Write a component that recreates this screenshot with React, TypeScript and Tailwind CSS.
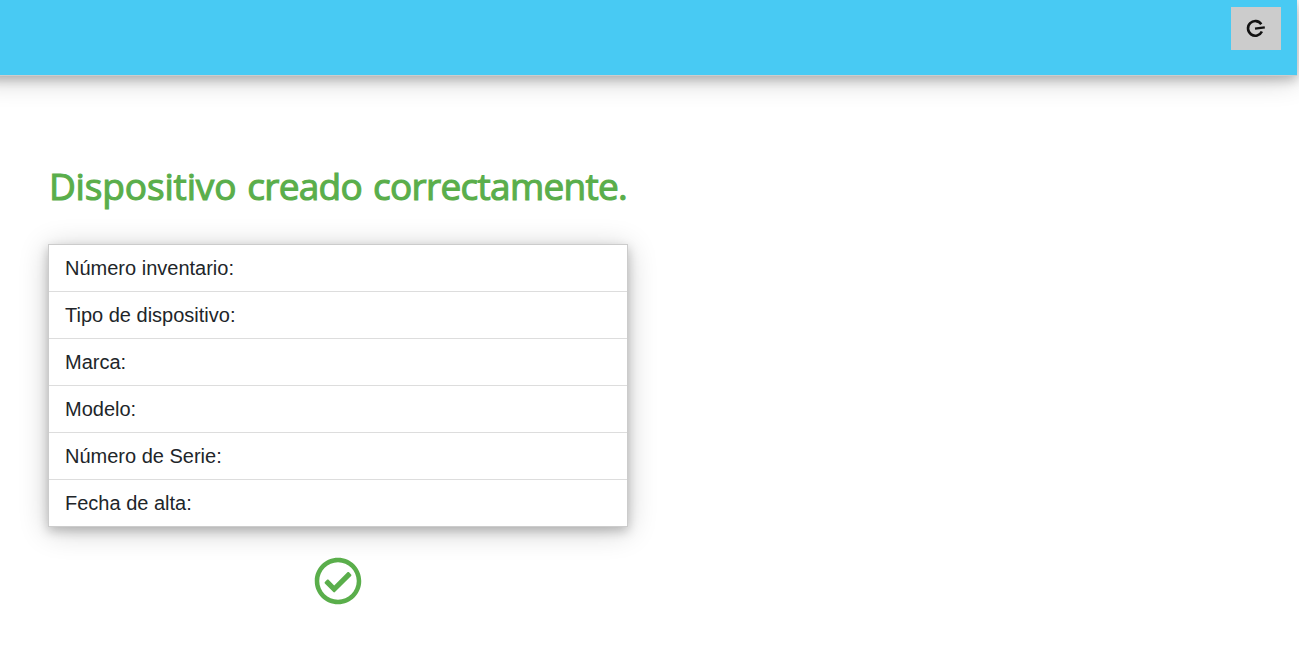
import { FaRegCheckCircle } from "react-icons/fa";

const fields = [
  "Número inventario:",
  "Tipo de dispositivo:",
  "Marca:",
  "Modelo:",
  "Número de Serie:",
  "Fecha de alta:",
];

export default function App() {
  return (
    <div className="h-[658px] overflow-hidden bg-white font-['Liberation_Sans',Arial,sans-serif] text-[#212529]">
      <header className="-ml-6 flex h-[76px] w-[1321px] items-start justify-end border-b border-[#cccccc] bg-[#48caf3] pt-[7px] pr-4 shadow-[0_4px_10px_0_rgba(0,0,0,0.21),0_4px_28px_0_rgba(0,0,0,0.2)]">
        <button aria-label="Salir" className="flex h-[43px] w-[50px] items-center justify-center bg-[#cccccc]">
          <svg className="h-5 w-5" viewBox="0 0 20 20" fill="none" stroke="#111111" strokeWidth="2.6">
            <path d="M15.3 5.2A7.3 7.3 0 1 0 15.9 12.5" />
            <path d="M9 9.6L18.8 8.4" strokeWidth="2.4" />
          </svg>
        </button>
      </header>
      <main className="ml-12 flex w-[580px] flex-col items-center pt-[86px]">
        <h1 className="h-[48px] whitespace-nowrap font-['Open_Sans',sans-serif] text-[37px] leading-[48px] tracking-[-0.7px] [word-spacing:2px] text-[#5aae4b] [-webkit-text-stroke:1.1px_#5aae4b]">
          <span className="tracking-[-0.14px]">Dispositivo</span> creado correctamente.
        </h1>
        <ul className="mt-[34px] w-full border border-[#cccccc] bg-white text-xl leading-[30px] shadow-[0_4px_10px_0_rgba(0,0,0,0.21),0_4px_28px_0_rgba(0,0,0,0.2)]">
          {fields.map((field) => (
            <li key={field} className="h-[47px] border-b border-[#dddddd] px-4 py-2 last:h-[46px] last:border-b-0">
              {field}
            </li>
          ))}
        </ul>
        <FaRegCheckCircle className="mt-[30px] h-12 w-12 text-[#5aae4b]" />
      </main>
    </div>
  );
}
